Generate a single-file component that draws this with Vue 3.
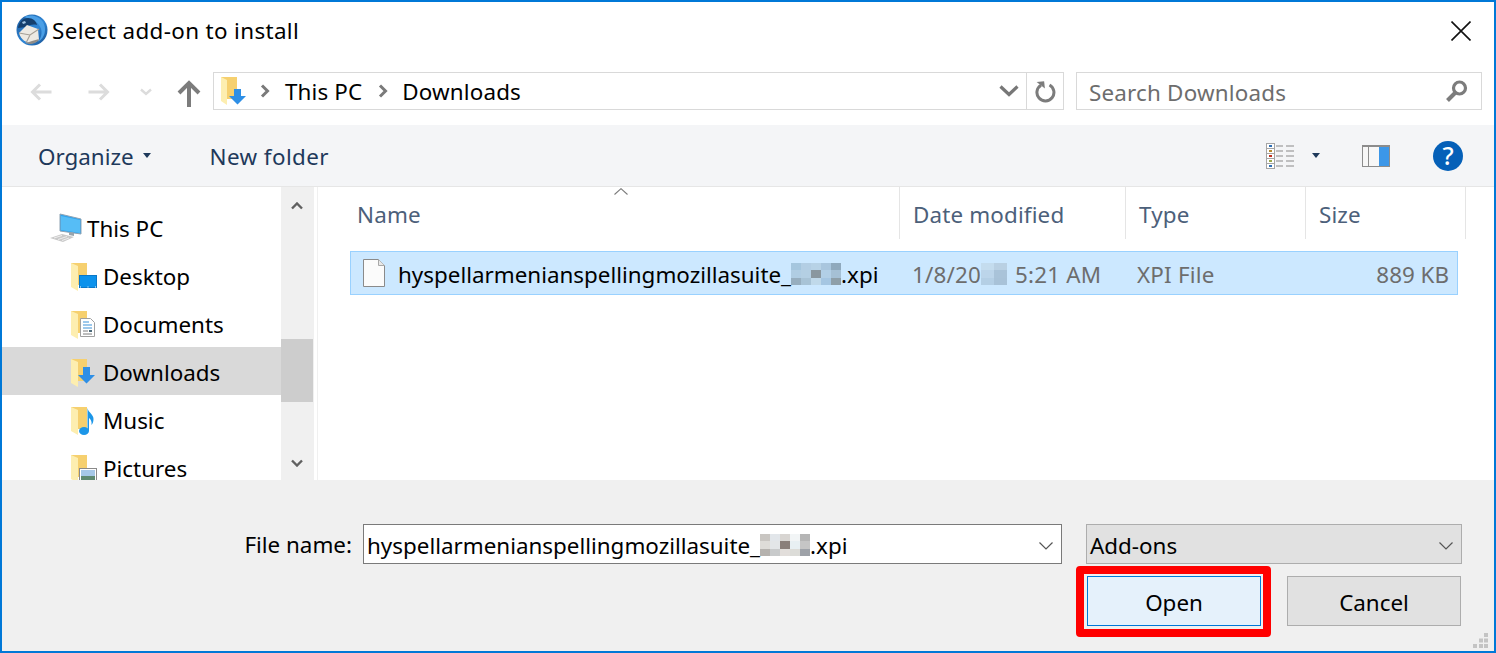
<script setup>
const navItems = [
  { label: 'Desktop', kind: 'desktop' },
  { label: 'Documents', kind: 'documents' },
  { label: 'Downloads', kind: 'downloads', active: true },
  { label: 'Music', kind: 'music' },
  { label: 'Pictures', kind: 'pictures' }
]
const listBlur = ['#a5c6de','#b3cee4','#b7d2e6','#a9c6de','#8fa9bd','#b0cde3','#b4cfe3','#8a979f','#b2cfe6','#a5c0d5','#97aebf','#a8c3d6','#c0d9ea','#a5c6e2','#8e9fa9']
const inputBlur = ['#c9c6c2','#e2e6ea','#d8d5d2','#f2f5f6','#b5b5b5','#dedcd8','#e3e6e8','#8a7f7a','#e8f0f3','#c5c5c5','#b5b2ae','#c8cacb','#e2dedb','#dcdcd8','#9ea2a8']
const dateBlur = ['#c4dcee','#b9d0e3','#bcd5ea','#a9c3d9','#b4cfe5','#a8c2d8']
</script>

<template>
  <div class="window">
    <header class="titlebar">
      <svg class="app-icon" viewBox="0 0 32 32">
        <defs>
          <linearGradient id="tb-blue" x1="0" y1="0" x2="1" y2="1">
            <stop offset="0" stop-color="#1c5a9c" />
            <stop offset="0.55" stop-color="#2f86d6" />
            <stop offset="1" stop-color="#17508f" />
          </linearGradient>
        </defs>
        <circle cx="16" cy="16" r="15.500" fill="url(#tb-blue)" />
        <path d="M8 3c7-3 15-1 19 5 4 7 2 16-5 20 4-5 5-12 1-17-3-4-9-6-15-8z" fill="#4a9fe6" />
        <path d="M2 14C3 8 7 4 12 4c5 0 8 3 9 7-4-1-8 0-11 2z" fill="#143f6e" />
        <path d="M6 8l3-1 1 2-3 1z" fill="#9fc3e3" />
        <path d="M3 19l8-8 11 4 1 11-5 3c-7 1-13-3-15-10z" fill="#ece9e3" />
        <path d="M3 19l11 2 9-6M14 21l-4 8" fill="none" stroke="#a39d94" stroke-width="1.100" />
        <path d="M10 29c4 2 8 1 12-2l1-2-7 2z" fill="#8f8b86" />
      </svg>
      <span class="title">Select add-on to install</span>
      <svg class="close" viewBox="0 0 20 20"><path d="M0.500 0.500L19.500 19.500M19.500 0.500L0.500 19.500" stroke="#111" stroke-width="1.600" /></svg>
    </header>

    <div class="addressrow">
      <svg class="nav-arrow back" viewBox="0 0 22 18"><path d="M21.500 9H3M10 1.500L2.500 9l7.500 7.500" fill="none" stroke="#dcdcdc" stroke-width="3" /></svg>
      <svg class="nav-arrow forward" viewBox="0 0 22 18"><path d="M0.500 9H19M12 1.500L19.500 9 12 16.500" fill="none" stroke="#dcdcdc" stroke-width="3" /></svg>
      <svg class="nav-chev" viewBox="0 0 12 8"><path d="M1 1.500L6 6l5-4.500" fill="none" stroke="#dcdcdc" stroke-width="2.400" /></svg>
      <svg class="nav-up" viewBox="0 0 24 27"><path d="M12 27V3M2 13L12 3l10 10" fill="none" stroke="#7c7c7c" stroke-width="4" /></svg>
      <div class="addressbox">
        <svg class="crumb-icon" viewBox="0 0 26 28">
          <path d="M0 0h16v22H0z" fill="#f6d06f" />
          <path d="M0 0l6 3v25l-6-4z" fill="#fdeeb0" />
          <path d="M13 12h7v7h5l-8.500 8.500L8 19h5z" fill="#2e8fe6" />
        </svg>
        <svg class="crumb-sep first" viewBox="0 0 10 14"><path d="M2 1.500L7.500 7 2 12.500" fill="none" stroke="#7a7a7a" stroke-width="3" /></svg>
        <span class="crumb">This PC</span>
        <svg class="crumb-sep" viewBox="0 0 10 14"><path d="M2 1.500L7.500 7 2 12.500" fill="none" stroke="#7a7a7a" stroke-width="3" /></svg>
        <span class="crumb">Downloads</span>
        <svg class="addr-down" viewBox="0 0 20 12"><path d="M1.500 1.500L10 9.500l8.500-8" fill="none" stroke="#777" stroke-width="3.200" /></svg>
        <div class="addr-refresh">
          <svg viewBox="0 0 22 24" width="22" height="24"><path d="M7 6.200A8.500 8.500 0 1 0 15.500 6" fill="none" stroke="#7c7c7c" stroke-width="3" /><path d="M3 2.500h7.500V10z" fill="#7c7c7c" transform="rotate(-6 7 6)" /></svg>
        </div>
      </div>
      <div class="searchbox">
        <span class="search-text">Search Downloads</span>
        <svg viewBox="0 0 24 24" width="24" height="24"><circle cx="14.500" cy="9" r="6" fill="none" stroke="#7c7c7c" stroke-width="3.200" /><path d="M10 14L2.500 21.500" stroke="#7c7c7c" stroke-width="4" /></svg>
      </div>
    </div>

    <div class="toolbar">
      <span class="tool">Organize</span>
      <span class="caret organize-caret"></span>
      <span class="tool newfolder">New folder</span>
      <svg class="view-icon" viewBox="0 0 28 26">
        <rect x="0.500" y="0.500" width="8" height="25" fill="#fff" stroke="#a5a5a5" />
        <path d="M1 5.500h7M1 10.500h7M1 15.500h7M1 20.500h7" stroke="#a5a5a5" />
        <rect x="3" y="2" width="3" height="2" fill="#2f6fb5" />
        <rect x="3" y="7" width="3" height="2" fill="#b58a2f" />
        <rect x="3" y="12" width="3" height="2" fill="#c0301f" />
        <rect x="3" y="17" width="3" height="2" fill="#9aa84a" />
        <rect x="3" y="22" width="3" height="2" fill="#2f6fb5" />
        <path d="M10 3h7M20 3h8M10 8h7M20 8h8M10 13h7M20 13h8M10 18h7M20 18h8M10 23h7M20 23h8" stroke="#8a8a8a" stroke-width="1.200" />
      </svg>
      <span class="caret view-caret"></span>
      <svg class="pane-icon" viewBox="0 0 28 22">
        <rect x="0.500" y="0.500" width="27" height="21" fill="#f7f7f7" stroke="#8c8c8c" />
        <rect x="0" y="0" width="28" height="2" fill="#8c8c8c" />
        <rect x="6" y="1" width="1" height="20" fill="#8c8c8c" />
        <rect x="17" y="2" width="10" height="19" fill="#3c97e8" />
      </svg>
      <div class="help">?</div>
    </div>

    <main class="main">
      <nav class="tree">
        <div class="tree-list">
          <div class="tree-row root">
            <svg class="tree-icon" viewBox="0 0 32 30">
              <path d="M10 1l21 5v15l-21-3z" fill="#2fa3ef" stroke="#8fa3b3" />
              <path d="M11 3l19 4v13l-19-3z" fill="#56bdf6" />
              <path d="M19 19l5 1v3l-5-1z" fill="#9aa5ad" />
              <path d="M0 25l12-4 12 3-11 5z" fill="#c9c9c9" />
              <path d="M4 25l8-2.500M8 26.500l9-3M12 27.500l7-2.500" stroke="#eee" />
            </svg>
            <span>This PC</span>
          </div>
          <div v-for="item in navItems" :key="item.label" class="tree-row" :class="{ active: item.active }">
            <svg class="tree-icon" viewBox="0 0 32 30">
              <path d="M2 2h16v22H2z" fill="#f6d06f" />
              <path d="M2 2l7 3v25l-7-4z" fill="#fdeeb0" />
              <g v-if="item.kind === 'desktop'">
                <rect x="10.500" y="14.500" width="17" height="12" fill="#0c92ec" stroke="#0a78c8" />
                <path d="M11 26h1M18.500 26h1M26 26h1" stroke="#fff" />
              </g>
              <g v-else-if="item.kind === 'documents'">
                <path d="M11.500 9.500h10l4 4v14h-14z" fill="#fff" stroke="#a0a0a0" />
                <path d="M14 13h6M14 16h9M14 19h9" stroke="#3d93d8" />
                <path d="M14 22h5M14 25h9" stroke="#7c7c7c" />
                <rect x="20" y="21" width="3" height="2" fill="#4d6a7a" />
              </g>
              <path v-else-if="item.kind === 'downloads'" d="M14 10h7v8h5l-8.500 8.500L9 18h5z" fill="#2e8fe6" />
              <g v-else-if="item.kind === 'music'">
                <ellipse cx="15" cy="26" rx="5" ry="4" fill="#1c96e8" />
                <path d="M18.500 26V3c1 5 6 6 6 11 0 3-1 5-2 6 .5-4-1-6-2.500-7v13z" fill="#1c96e8" />
              </g>
              <g v-else>
                <rect x="10.500" y="15.500" width="17" height="14" fill="#fff" stroke="#8a8a8a" />
                <rect x="12" y="17" width="14" height="6" fill="#a6c8e8" />
                <rect x="12" y="23" width="14" height="5" fill="#5f8a72" />
              </g>
            </svg>
            <span>{{ item.label }}</span>
          </div>
        </div>
        <div class="scrollbar">
          <svg class="sb-arrow up" viewBox="0 0 12 8"><path d="M1 6.500L6 1.500l5 5" fill="none" stroke="#606060" stroke-width="2.400" /></svg>
          <div class="sb-thumb"></div>
          <svg class="sb-arrow down" viewBox="0 0 12 8"><path d="M1 1.500L6 6.500l5-5" fill="none" stroke="#606060" stroke-width="2.400" /></svg>
        </div>
      </nav>

      <section class="files">
        <svg class="sort" viewBox="0 0 14 7"><path d="M0.500 6.500L7 0.700l6.500 5.800" fill="none" stroke="#7a7a7a" stroke-width="1.100" /></svg>
        <div class="columns head">
          <div class="cell name">Name</div>
          <div class="cell">Date modified</div>
          <div class="cell">Type</div>
          <div class="cell">Size</div>
        </div>
        <div class="file-row">
          <svg class="file-icon" viewBox="0 0 22 28">
            <path d="M0.500 0.500h15l6 6v21h-21z" fill="#fbfbfb" stroke="#8a8a8a" />
            <path d="M15.500 0.500v6h6" fill="#e8e8e8" stroke="#a8a8a8" />
          </svg>
          <div class="fname">
            <span>hyspellarmenianspellingmozillasuite_</span>
            <span class="blur b-list"><i v-for="(c, i) in listBlur" :key="i" :style="{ background: c }"></i></span>
            <span>.xpi</span>
          </div>
          <div class="fdate">
            <span>1/8/20</span>
            <span class="blur b-date"><i v-for="(c, i) in dateBlur" :key="i" :style="{ background: c }"></i></span>
            <span>5:21 AM</span>
          </div>
          <div class="ftype">XPI File</div>
          <div class="fsize">889 KB</div>
        </div>
      </section>
    </main>

    <footer class="footer">
      <div class="fileline">
        <label>File name:</label>
        <div class="nameinput">
          <span>hyspellarmenianspellingmozillasuite_</span>
          <span class="blur b-list"><i v-for="(c, i) in inputBlur" :key="i" :style="{ background: c }"></i></span>
          <span>.xpi</span>
          <svg class="combo-chev" viewBox="0 0 14 8"><path d="M0.500 0.500L7 7l6.500-6.500" fill="none" stroke="#555" stroke-width="1.200" /></svg>
        </div>
        <div class="filter">
          <span>Add-ons</span>
          <svg class="combo-chev" viewBox="0 0 14 8"><path d="M0.500 0.500L7 7l6.500-6.500" fill="none" stroke="#555" stroke-width="1.200" /></svg>
        </div>
      </div>
      <div class="buttons">
        <button class="btn primary">Open</button>
        <button class="btn">Cancel</button>
      </div>
      <div class="highlight"></div>
      <svg class="grip" viewBox="0 0 16 16">
        <path d="M11 0h4v4h-4zM6 5.500h4v4H6zM11 5.500h4v4h-4zM0 11h4v4H0zM6 11h4v4H6zM11 11h4v4h-4z" fill="#c4c4c4" />
      </svg>
    </footer>
  </div>
</template>

<style scoped>
.window {
  width: 1496px;
  height: 653px;
  box-sizing: border-box;
  border: 2px solid #0078d7;
  background: #fff;
  display: flex;
  flex-direction: column;
  position: relative;
  overflow: hidden;
  font-family: "Noto Sans", sans-serif;
  font-size: 22.4px;
  color: #000;
}
.titlebar {
  height: 58px;
  box-sizing: border-box;
  flex: none;
  display: flex;
  align-items: center;
  padding: 0 23px 2px 14px;
}
.app-icon { width: 32px; height: 32px; flex: none; }
.title { margin-left: 4px; letter-spacing: 0.36px; }
.close { width: 20px; height: 20px; margin-left: auto; margin-top: 1px; }

.addressrow {
  height: 65px;
  flex: none;
  display: flex;
  align-items: flex-start;
  padding-top: 12px;
  box-sizing: border-box;
}
.nav-arrow { width: 22px; height: 18px; margin-top: 11px; flex: none; }
.back { margin-left: 28px; }
.forward { margin-left: 36px; }
.nav-chev { width: 12px; height: 8px; margin: 16px 0 0 30px; flex: none; }
.nav-up { width: 24px; height: 27px; margin: 8px 0 0 25px; flex: none; }
.addressbox {
  width: 851px;
  height: 38px;
  margin-left: 12px;
  box-sizing: border-box;
  border: 1px solid #d9d9d9;
  display: flex;
  align-items: center;
  flex: none;
}
.crumb-icon { width: 26px; height: 28px; margin-left: 7px; flex: none; }
.crumb-sep { width: 10px; height: 14px; margin: 0 14px 0 16px; flex: none; }
.crumb-sep.first { margin-left: 13px; margin-right: 15px; }
.crumb { white-space: nowrap; letter-spacing: 0.15px; }
.addr-down { width: 20px; height: 12px; margin-left: auto; margin-right: 7px; flex: none; }
.addr-refresh {
  width: 36px;
  height: 36px;
  border-left: 1px solid #d9d9d9;
  display: flex;
  align-items: center;
  justify-content: center;
  flex: none;
}
.searchbox {
  width: 406px;
  height: 38px;
  margin-left: 12px;
  box-sizing: border-box;
  border: 1px solid #d9d9d9;
  display: flex;
  align-items: center;
  justify-content: space-between;
  padding: 0 12px;
  color: #6d6d6d;
  letter-spacing: 0.2px;
  flex: none;
}
.search-text { padding-top: 2px; }

.toolbar {
  height: 62px;
  flex: none;
  box-sizing: border-box;
  background: #f4f5f7;
  border-bottom: 1px solid #e6e6e6;
  display: flex;
  align-items: center;
  color: #1e395b;
}
.tool { white-space: nowrap; padding-top: 2px; }
.toolbar > .tool:first-child { margin-left: 36px; }
.caret {
  width: 0;
  height: 0;
  border-left: 4.500px solid transparent;
  border-right: 4.500px solid transparent;
  border-top: 5px solid #1e395b;
  flex: none;
}
.organize-caret { margin-left: 9px; }
.newfolder { margin-left: 59px; letter-spacing: 0.4px; }
.view-icon { width: 28px; height: 26px; margin-left: auto; flex: none; }
.view-caret { margin-left: 18px; }
.pane-icon { width: 28px; height: 22px; margin-left: 42px; flex: none; }
.help {
  width: 30px;
  height: 30px;
  margin: 0 31px 0 43px;
  border-radius: 50%;
  background: #0560b8;
  color: #fff;
  font-size: 25px;
  font-weight: 500;
  line-height: 29px;
  text-align: center;
  flex: none;
}

.main {
  height: 293px;
  flex: none;
  display: flex;
  overflow: hidden;
}
.tree {
  width: 316px;
  flex: none;
  display: flex;
  border-right: 1px solid #f0f0f0;
  box-sizing: border-box;
  padding-right: 4px;
}
.tree-list {
  width: 279px;
  flex: none;
  padding-top: 16px;
  overflow: hidden;
}
.tree-row {
  height: 48px;
  box-sizing: border-box;
  padding-top: 2px;
  display: flex;
  align-items: center;
  padding-left: 67px;
  white-space: nowrap;
}
.tree-row.root { padding-left: 48px; }
.tree-row.active { background: #d9d9d9; }
.tree-icon { width: 32px; height: 30px; flex: none; margin-right: 2px; }
.tree-row.root .tree-icon { margin-right: 5px; }
.scrollbar {
  width: 33px;
  flex: none;
  background: #f0f0f0;
  position: relative;
}
.sb-arrow { width: 12px; height: 8px; position: absolute; left: 10px; }
.sb-arrow.up { top: 15px; }
.sb-arrow.down { top: 272px; }
.sb-thumb {
  position: absolute;
  top: 152px;
  left: 0;
  width: 32px;
  height: 63px;
  background: #cdcdcd;
}

.files {
  flex: 1;
  position: relative;
  min-width: 0;
}
.sort { width: 14px; height: 7px; position: absolute; left: 296px; top: 1px; }
.columns {
  display: grid;
  grid-template-columns: 582px 226px 180px 160px;
  height: 52px;
}
.cell {
  box-sizing: border-box;
  border-right: 1px solid #e5e5e5;
  padding-left: 13px;
  display: flex;
  align-items: center;
  color: #4c607a;
  padding-top: 2px;
  letter-spacing: 0.15px;
}
.cell.name { padding-left: 39px; }
.file-row {
  position: relative;
  margin: 12px 0 0 32px;
  width: 1108px;
  height: 44px;
  box-sizing: border-box;
  border: 1px solid #99d1ff;
  background: #cce8ff;
  display: flex;
  align-items: center;
  white-space: nowrap;
}
.file-icon { width: 22px; height: 28px; margin-left: 12px; flex: none; }
.fname {
  width: 514px;
  margin-left: 13px;
  display: flex;
  align-items: center;
  flex: none;
  padding-top: 2px;
}
.fdate {
  width: 225px;
  display: flex;
  align-items: center;
  color: #6d6d6d;
  letter-spacing: 0.2px;
  flex: none;
  padding-top: 2px;
}
.ftype {
  width: 150px;
  color: #6d6d6d;
  letter-spacing: 0.2px;
  flex: none;
  padding-top: 2px;
}
.fsize {
  flex: 1;
  text-align: right;
  padding: 2px 8px 0 0;
  color: #6d6d6d;
}
.blur { display: inline-grid; flex: none; }
.blur i { display: block; }
.b-list {
  grid-template-columns: repeat(5, 10px);
  grid-template-rows: repeat(3, 7.330px);
}
.b-date {
  grid-template-columns: repeat(2, 13px);
  grid-template-rows: repeat(3, 7.330px);
  margin: 0 8px 0 0;
}

.footer {
  flex: 1;
  background: #f0f0f0;
  position: relative;
  min-height: 0;
}
.fileline {
  display: flex;
  align-items: flex-start;
  padding-top: 44px;
}
.fileline label {
  width: 352px;
  height: 40px;
  line-height: 42px;
  text-align: right;
  padding-right: 2px;
  box-sizing: border-box;
  flex: none;
}
.nameinput {
  width: 699px;
  height: 40px;
  margin-left: 9px;
  box-sizing: border-box;
  border: 1px solid #7a7a7a;
  background: #fff;
  display: flex;
  align-items: center;
  padding: 2px 0 0 3px;
  white-space: nowrap;
  position: relative;
  flex: none;
}
.combo-chev { width: 14px; height: 8px; position: absolute; right: 8px; top: 17px; }
.filter {
  width: 376px;
  height: 40px;
  margin-left: 24px;
  box-sizing: border-box;
  border: 1px solid #adadad;
  background: #e1e1e1;
  display: flex;
  align-items: center;
  padding: 2px 0 0 3px;
  position: relative;
  flex: none;
}
.buttons {
  display: flex;
  margin: 12px 0 0 1085px;
  gap: 26px;
}
.btn {
  width: 174px;
  height: 50px;
  box-sizing: border-box;
  border: 1px solid #adadad;
  background: #e1e1e1;
  font: inherit;
  color: #000;
  padding: 2px 0 0;
}
.btn.primary {
  background: #e5f1fb;
  border-color: #0078d7;
}
.highlight {
  position: absolute;
  left: 1074px;
  top: 86px;
  width: 195px;
  height: 71px;
  box-sizing: border-box;
  border: 8px solid #ff0000;
  border-radius: 4px;
}
.grip {
  position: absolute;
  right: 5px;
  bottom: 2px;
  width: 16px;
  height: 16px;
}
</style>

<style>
html, body { margin: 0; background: #fff; overflow: hidden; }
</style>
